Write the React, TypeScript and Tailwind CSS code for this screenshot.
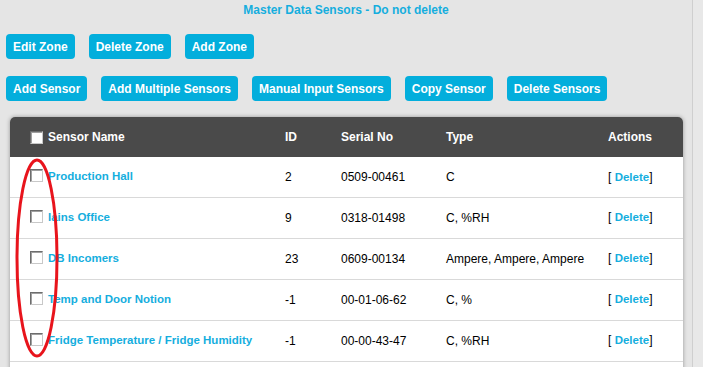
import React from 'react'

const zoneButtons = ['Edit Zone', 'Delete Zone', 'Add Zone']
const sensorButtons = ['Add Sensor', 'Add Multiple Sensors', 'Manual Input Sensors', 'Copy Sensor', 'Delete Sensors']

const sensors = [
  { name: 'Production Hall', id: '2', serial: '0509-00461', type: 'C' },
  { name: 'Iains Office', id: '9', serial: '0318-01498', type: 'C, %RH' },
  { name: 'DB Incomers', id: '23', serial: '0609-00134', type: 'Ampere, Ampere, Ampere' },
  { name: 'Temp and Door Notion', id: '-1', serial: '00-01-06-62', type: 'C, %' },
  { name: 'Fridge Temperature / Fridge Humidity', id: '-1', serial: '00-00-43-47', type: 'C, %RH' },
]

function Box() {
  return (
    <span className="inline-block w-[13px] h-[13px] shrink-0 bg-white border border-t-[#6d6d6d] border-l-[#6d6d6d] border-b-[#c8c8c8] border-r-[#c8c8c8] shadow-[inset_1px_1px_0_#a0a0a0]" />
  )
}

function Btn({ label }: { label: string }) {
  return (
    <button className="h-[25px] px-[7px] rounded-[4px] bg-[#03aedc] text-white text-[12px] font-bold leading-none">
      {label}
    </button>
  )
}

export default function App() {
  return (
    <div className="relative h-[367px] overflow-hidden flex bg-[#e5e5e5] font-['Liberation_Sans',Arial,sans-serif]">
      <div className="w-[693px] shrink-0 border-r border-[#cfcfcf] pt-[3px]">
        <p className="text-center text-[12px] leading-[14px] font-bold text-[#15aede]">Master Data Sensors - Do not delete</p>

        <div className="flex gap-[14px] pl-[6px] mt-[17px]">
          {zoneButtons.map(b => <Btn key={b} label={b} />)}
        </div>
        <div className="flex gap-[14px] pl-[6px] mt-[17px]">
          {sensorButtons.map(b => <Btn key={b} label={b} />)}
        </div>

        {/* Sensor table */}
        <div className="ml-[10px] mt-[16px] w-[673px] bg-white rounded-t-[5px] shadow-[0_0_4px_rgba(0,0,0,0.35)] overflow-hidden">
          <table className="w-full table-fixed border-collapse text-[12px]">
            <colgroup>
              <col className="w-[275px]" />
              <col className="w-[56px]" />
              <col className="w-[105px]" />
              <col className="w-[162px]" />
              <col className="w-[75px]" />
            </colgroup>
            <thead>
              <tr className="h-[40px] bg-[#4a4a4a] text-white font-bold text-left">
                <th className="pl-[20px]">
                  <div className="flex items-center gap-[5px]">
                    <Box />
                    <span>Sensor Name</span>
                  </div>
                </th>
                <th>ID</th>
                <th>Serial No</th>
                <th>Type</th>
                <th>Actions</th>
              </tr>
            </thead>
            <tbody className="text-black">
              {sensors.map((s, i) => (
                <tr key={s.name} className={`${i === 0 ? 'h-[40px]' : 'h-[41px]'} border-b border-[#d9d9d9]`}>
                  <td className="pl-[20px]">
                    <div className="flex items-center gap-[5px]">
                      <span className="-mt-[3px] flex"><Box /></span>
                      <span className="font-bold text-[11.5px] text-[#15aede] whitespace-nowrap">{s.name}</span>
                    </div>
                  </td>
                  <td>{s.id}</td>
                  <td>{s.serial}</td>
                  <td className="whitespace-nowrap">{s.type}</td>
                  <td className="whitespace-nowrap">
                    [ <span className="font-bold text-[11.5px] text-[#15aede]">Delete</span>]
                  </td>
                </tr>
              ))}
            </tbody>
          </table>
          <div className="h-[20px]" />
        </div>
      </div>
      <div className="flex-1 bg-[#e8e8e8]" />

      {/* red annotation ellipse */}
      <svg className="absolute left-0 top-0 pointer-events-none" width="80" height="367">
        <ellipse cx="37" cy="258" rx="20" ry="98" fill="none" stroke="#e8141c" strokeWidth="3" />
      </svg>
    </div>
  )
}
